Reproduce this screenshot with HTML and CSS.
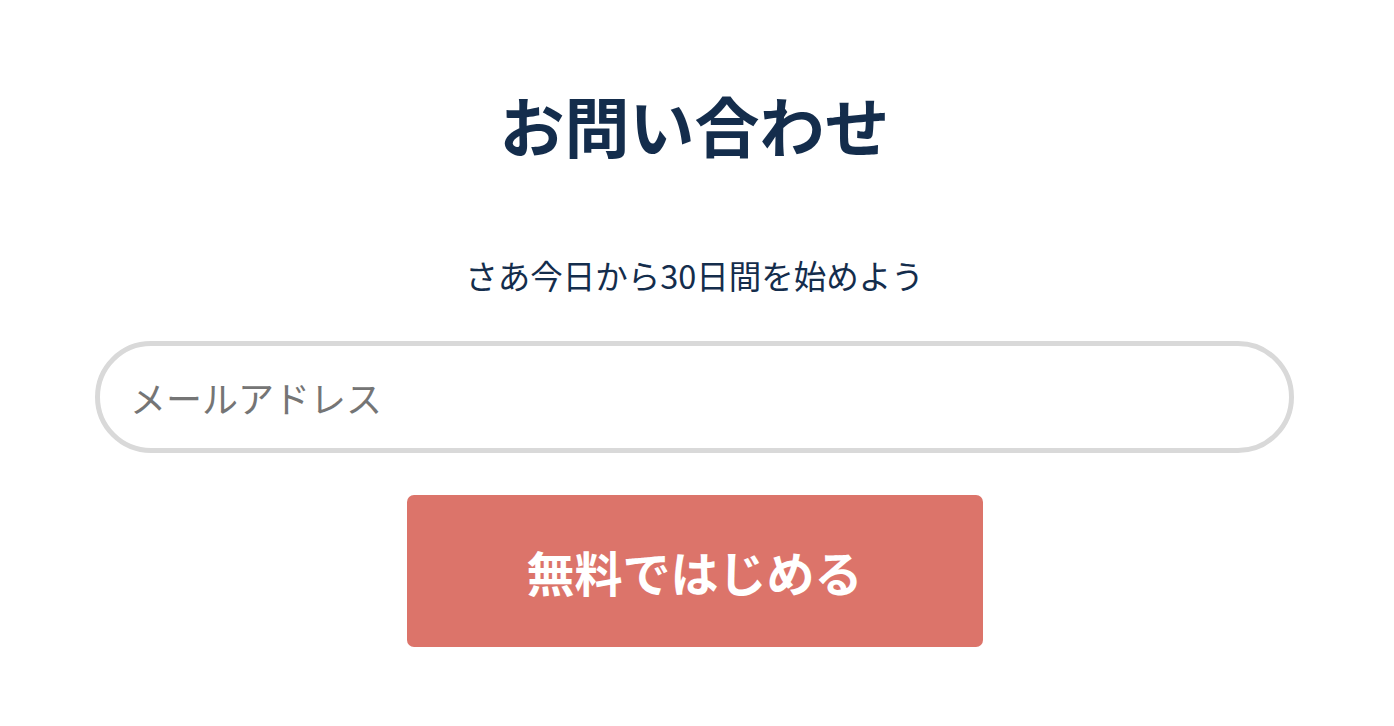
FILE: index.html
```html
<!DOCTYPE html>
<html lang="ja">
<head>
<meta charset="utf-8">
<title>お問い合わせ</title>
<link rel="stylesheet" href="styles.css">
</head>
<body>
<main class="contact">
  <h1 class="contact-title">お問い合わせ</h1>
  <p class="contact-lead">さあ今日から30日間を始めよう</p>
  <form class="contact-form">
    <input class="email-input" type="email" placeholder="メールアドレス">
    <button class="submit-btn" type="button">無料ではじめる</button>
  </form>
</main>
</body>
</html>
```
FILE: styles.css
```css
html, body {
  margin: 0;
  padding: 0;
  background: #ffffff;
}
body {
  font-family: "Noto Sans CJK JP", "Noto Sans", sans-serif;
  color: #142d4c;
}
.contact {
  display: flex;
  flex-direction: column;
  align-items: center;
  padding: 92px 5px 0 0;
}
.contact-title {
  margin: 0;
  font-size: 65px;
  line-height: 65px;
  font-weight: 700;
  color: #142d4c;
}
.contact-lead {
  margin: 102px 0 0;
  font-size: 32.5px;
  line-height: 32px;
  font-weight: 400;
  color: #142d4c;
}
.contact-form {
  display: flex;
  flex-direction: column;
  align-items: center;
  width: 1199px;
  margin-top: 50px;
}
.email-input {
  box-sizing: border-box;
  width: 100%;
  height: 112px;
  border: 5px solid #d9d9d9;
  border-radius: 56px;
  padding: 0 30px;
  font-family: "Noto Sans CJK JP", "Noto Sans", sans-serif;
  font-size: 36px;
  color: #333;
  outline: none;
  background: #fff;
}
.email-input::placeholder {
  color: #757575;
}
.submit-btn {
  margin-top: 42px;
  width: 576px;
  height: 152px;
  border: none;
  border-radius: 7px;
  background: #dc746a;
  color: #ffffff;
  font-family: "Noto Sans CJK JP", "Noto Sans", sans-serif;
  font-size: 48px;
  font-weight: 700;
  cursor: pointer;
}
```
